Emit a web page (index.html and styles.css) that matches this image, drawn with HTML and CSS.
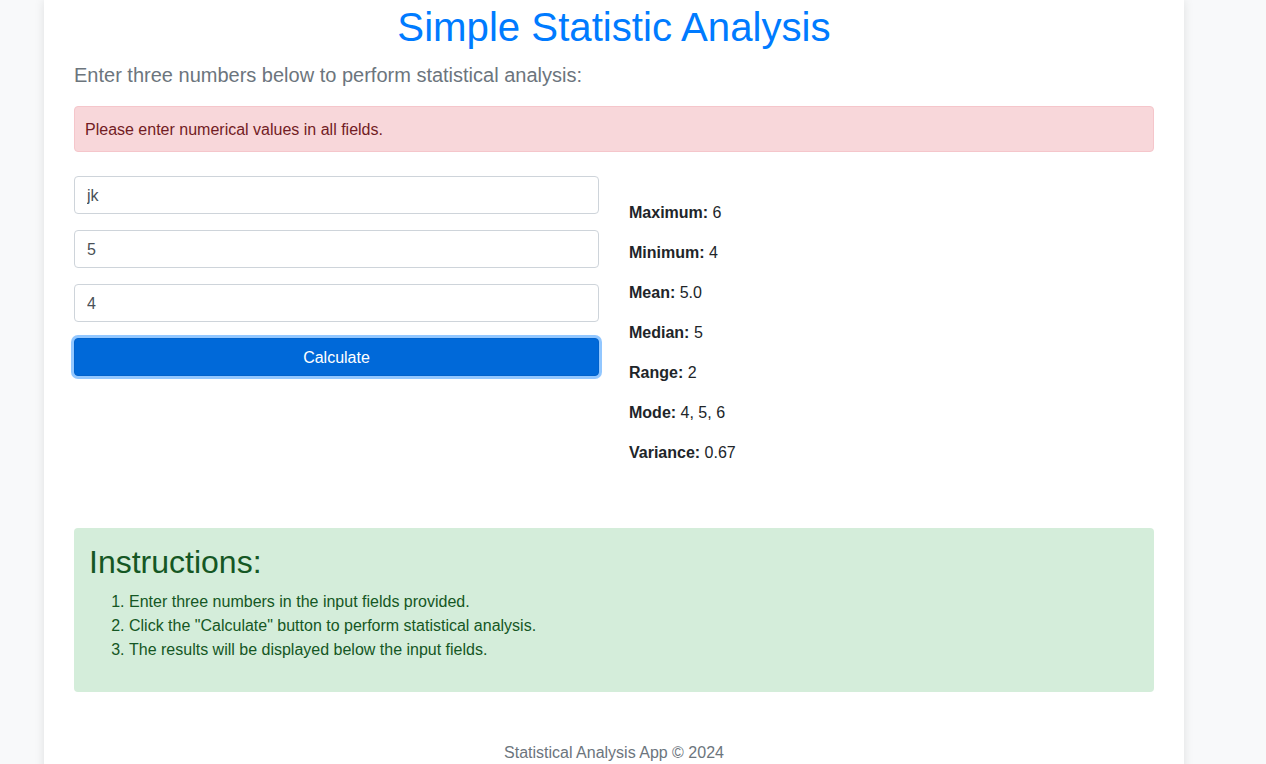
FILE: index.html
```html
<!DOCTYPE html>
<html lang="en">
<head>
<meta charset="utf-8">
<title>Simple Statistic Analysis</title>
<link rel="stylesheet" href="styles.css">
</head>
<body>
<div class="container">
  <h1 class="title">Simple Statistic Analysis</h1>
  <p class="lead">Enter three numbers below to perform statistical analysis:</p>
  <div class="alert-danger">Please enter numerical values in all fields.</div>
  <div class="row">
    <form class="col form-col">
      <input class="field" type="text" value="jk">
      <input class="field" type="text" value="5">
      <input class="field" type="text" value="4">
      <button type="button" class="btn">Calculate</button>
    </form>
    <div class="col results">
      <p><strong>Maximum:</strong> 6</p>
      <p><strong>Minimum:</strong> 4</p>
      <p><strong>Mean:</strong> 5.0</p>
      <p><strong>Median:</strong> 5</p>
      <p><strong>Range:</strong> 2</p>
      <p><strong>Mode:</strong> 4, 5, 6</p>
      <p><strong>Variance:</strong> 0.67</p>
    </div>
  </div>
  <div class="instructions">
    <h2>Instructions:</h2>
    <ol>
      <li>Enter three numbers in the input fields provided.</li>
      <li>Click the "Calculate" button to perform statistical analysis.</li>
      <li>The results will be displayed below the input fields.</li>
    </ol>
  </div>
  <footer class="footer">Statistical Analysis App © 2024</footer>
</div>
</body>
</html>
```
FILE: styles.css
```css
* { box-sizing: border-box; }
html, body { margin: 0; padding: 0; }
body {
  background: #f8f9fa;
  font-family: "Liberation Sans", Arial, sans-serif;
  font-size: 16px;
  line-height: 1.5;
  color: #212529;
  overflow: hidden;
}
.container {
  width: 1140px;
  margin-left: 44px;
  background: #fff;
  box-shadow: 0 0 10px rgba(0,0,0,0.1);
  padding: 4px 30px 40px;
}
.title {
  margin: 0 0 8px;
  text-align: center;
  color: #007bff;
  font-size: 40.2px;
  font-weight: 400;
  line-height: 48px;
}
.lead {
  margin: 0 0 16px;
  font-size: 20px;
  color: #6c757d;
  line-height: 30px;
}
.alert-danger {
  background: #f8d7da;
  border: 1px solid #f5c6cb;
  color: #721c24;
  border-radius: 4px;
  padding: 11px 10px 9px;
  line-height: 24px;
  margin-bottom: 24px;
}
.row {
  display: flex;
  gap: 30px;
}
.col { flex: 1 1 0; }
.form-col {
  display: flex;
  flex-direction: column;
  gap: 16px;
  margin: 0;
}
.field {
  display: block;
  width: 100%;
  height: 38px;
  padding: 7px 12px 5px;
  font-family: inherit;
  font-size: 16px;
  line-height: 24px;
  color: #495057;
  background: #fff;
  border: 1px solid #ced4da;
  border-radius: 4px;
}
.btn {
  display: block;
  width: 100%;
  height: 38px;
  padding: 7px 12px 5px;
  font-family: inherit;
  font-size: 16px;
  line-height: 24px;
  color: #fff;
  background: #0069d9;
  border: 1px solid #0062cc;
  border-radius: 4px;
  box-shadow: 0 0 0 3px rgba(38,143,255,0.5);
}
.results { padding-top: 25px; }
.results p { margin: 0 0 16px; line-height: 24px; }
.results strong { font-weight: 700; }
.instructions {
  margin-top: 47px;
  background: #d4edda;
  color: #155724;
  border-radius: 4px;
  padding: 15px;
}
.instructions h2 {
  margin: 0 0 9px;
  font-size: 32px;
  font-weight: 400;
  line-height: 1.2;
}
.instructions ol {
  margin: 0 0 15px;
  padding-left: 40px;
}
.footer {
  margin-top: 49px;
  text-align: center;
  color: #6c757d;
  line-height: 24px;
}
```
